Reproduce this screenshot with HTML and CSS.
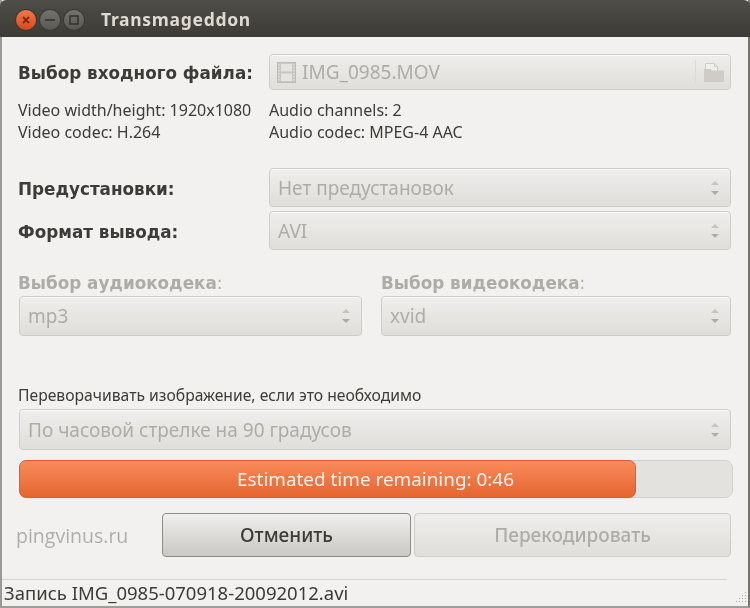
FILE: index.html
```html
<!DOCTYPE html>
<html lang="ru">
<head>
  <meta charset="UTF-8">
  <title>Transmageddon</title>
  <link rel="stylesheet" href="styles.css">
</head>
<body>
  <div class="window">
    <div class="titlebar">
      <div class="win-buttons">
        <span class="win-btn close">
          <svg width="10" height="10" viewBox="0 0 10 10"><path d="M2 2l6 6M8 2l-6 6" stroke="#7a2a10" stroke-width="1.8" fill="none"/></svg>
        </span>
        <span class="win-btn">
          <svg width="10" height="10" viewBox="0 0 10 10"><path d="M0 5h10" stroke="#33322d" stroke-width="1.6" fill="none"/></svg>
        </span>
        <span class="win-btn">
          <svg width="10" height="10" viewBox="0 0 10 10"><rect x="1" y="1" width="8" height="8" stroke="#33322d" stroke-width="1.5" fill="none"/></svg>
        </span>
      </div>
      <span class="title">Transmageddon</span>
    </div>

    <div class="content">
      <div class="row file-row">
        <label class="label">Выбор входного файла:</label>
        <div class="control file-control">
          <svg class="film" width="19" height="21" viewBox="0 0 19 21">
            <rect x="0.5" y="0.500" width="18" height="20" fill="#c9c7c2" stroke="#bdbbb6"/>
            <rect x="4" y="2" width="11" height="7.500" fill="#e6e4e1"/>
            <rect x="4" y="11.500" width="11" height="7.500" fill="#e6e4e1"/>
            <path d="M2 2v17M17 2v17" stroke="#e0ded9" stroke-width="1.500" stroke-dasharray="1.500 1.500" fill="none"/>
          </svg>
          <span class="file-name">IMG_0985.MOV</span>
          <span class="file-sep"></span>
          <svg class="folder" width="22" height="20" viewBox="0 0 22 20">
            <path d="M2.500 9V1.500h9l3 3V9" fill="#f1efec" stroke="#d0cec9"/>
            <path d="M11.500 1.500v3h3" fill="none" stroke="#d0cec9"/>
            <path d="M1 7h7l1 1.500h12V20H1z" fill="#cfcbc7"/>
          </svg>
        </div>
      </div>

      <div class="info">
        <div class="info-col left">
          <div>Video width/height: 1920x1080</div>
          <div>Video codec: H.264</div>
        </div>
        <div class="info-col">
          <div>Audio channels: 2</div>
          <div>Audio codec: MPEG-4 AAC</div>
        </div>
      </div>

      <div class="row preset-row">
        <label class="label">Предустановки:</label>
        <div class="control select">
          <span>Нет предустановок</span>
          <span class="spin"><i class="up"></i><i class="down"></i></span>
        </div>
      </div>
      <div class="row format-row">
        <label class="label">Формат вывода:</label>
        <div class="control select">
          <span>AVI</span>
          <span class="spin"><i class="up"></i><i class="down"></i></span>
        </div>
      </div>

      <div class="codecs">
        <div class="codec audio">
          <div class="label off">Выбор аудиокодека<span class="colon">:</span></div>
          <div class="control select small">
            <span>mp3</span>
            <span class="spin"><i class="up"></i><i class="down"></i></span>
          </div>
        </div>
        <div class="codec video">
          <div class="label off">Выбор видеокодека<span class="colon">:</span></div>
          <div class="control select small">
            <span>xvid</span>
            <span class="spin"><i class="up"></i><i class="down"></i></span>
          </div>
        </div>
      </div>

      <div class="rotate-label">Переворачивать изображение, если это необходимо</div>
      <div class="control select rotate">
        <span>По часовой стрелке на 90 градусов</span>
        <span class="spin"><i class="up"></i><i class="down"></i></span>
      </div>

      <div class="progress">
        <div class="progress-fill" style="width: 615px"></div>
        <span class="progress-text">Estimated time remaining: 0:46</span>
      </div>

      <div class="actions">
        <span class="brand">pingvinus.ru</span>
        <button class="btn cancel">Отменить</button>
        <button class="btn start">Перекодировать</button>
      </div>
    </div>

    <div class="statusbar">
      <span>Запись IMG_0985-070918-20092012.avi</span>
      <svg class="grip" width="14" height="14" viewBox="0 0 14 14">
        <path d="M12 1h1v1h-1zM9 4h1v1H9zM12 4h1v1h-1zM6 7h1v1H6zM9 7h1v1H9zM12 7h1v1h-1zM3 10h1v1H3zM6 10h1v1H6zM9 10h1v1H9zM12 10h1v1h-1z" fill="#a9a7a2"/>
      </svg>
    </div>
  </div>
</body>
</html>
```

FILE: styles.css
```css
* {
  box-sizing: border-box;
}
html, body {
  margin: 0;
  height: 100%;
  background: #f2f1ef;
}
body {
  font-family: "Noto Sans", "Open Sans", sans-serif;
  overflow: hidden;
}
.window {
  width: 750px;
  height: 608px;
  display: flex;
  flex-direction: column;
  background: #f2f1ef;
  border-left: 2px solid #9c9a94;
  border-right: 2px solid #77756f;
  border-bottom: 2px solid #a09e98;
  color: #3c3b37;
  filter: blur(0.35px);
}

/* title bar */
.titlebar {
  height: 37px;
  margin: 0 -2px;
  display: flex;
  align-items: center;
  background: linear-gradient(#4f4d47, #3c3b36);
  border-radius: 6px 6px 0 0;
  flex-shrink: 0;
}
.win-buttons {
  display: flex;
  gap: 4px;
  margin-left: 16px;
  margin-top: 2px;
}
.win-btn {
  width: 20px;
  height: 20px;
  border-radius: 50%;
  display: flex;
  align-items: center;
  justify-content: center;
  background: linear-gradient(#75736d, #5a5852);
  box-shadow: 0 0 0 1px #3a3934;
}
.win-btn.close {
  background: linear-gradient(#f5774a, #d9481c);
}
.title {
  margin-left: 17px;
  font-size: 17.5px;
  font-weight: 700;
  color: #dfdbd2;
  letter-spacing: 0.7px;
}

/* main area */
.content {
  flex: 1;
  padding: 17px 17px 0 16px;
}
.row {
  display: flex;
  align-items: center;
}
.row .label {
  margin-top: 2px;
}
.label {
  width: 251px;
  font-family: "DejaVu Sans", sans-serif;
  font-size: 16.8px;
  font-weight: 700;
  color: #3c3b37;
  flex-shrink: 0;
}
.label.off {
  color: #aeaca7;
  width: auto;
}
.colon {
  font-weight: 400;
}
.control {
  display: flex;
  align-items: center;
  flex: 1;
  font-size: 19px;
  color: #aeaca7;
  background: linear-gradient(#efeeec, #dfdedb);
  border: 1px solid #cfcdc9;
  border-radius: 4px;
  box-shadow: inset 0 1px 0 #fafaf9;
}

.file-control {
  height: 36px;
  padding: 0 5px 0 7px;
}
.film {
  margin-right: 6px;
}
.file-name {
  flex: 1;
}
.file-sep {
  width: 1px;
  height: 24px;
  background: #dcdad7;
  margin-right: 7px;
}

.info {
  display: flex;
  margin-top: 10px;
  font-size: 16px;
  line-height: 21.5px;
  color: #3c3b37;
}
.info-col.left {
  width: 251px;
}

.select {
  padding: 0 11px 0 8px;
  justify-content: space-between;
}
.preset-row {
  margin-top: 25px;
}
.preset-row .select {
  height: 39px;
}
.format-row {
  margin-top: 4px;
}
.format-row .select {
  height: 39px;
}
.spin {
  display: flex;
  flex-direction: column;
  gap: 6px;
}
.spin i {
  display: block;
  width: 0;
  height: 0;
  border-left: 4px solid transparent;
  border-right: 4px solid transparent;
}
.spin .up {
  border-bottom: 4px solid #c6c4bf;
}
.spin .down {
  border-top: 4px solid #aeaca7;
}

.codecs {
  display: flex;
  margin-top: 22px;
}
.codec.audio {
  width: 344px;
  margin-right: 19px;
}
.codec.video {
  width: 350px;
}
.codec .label {
  margin-bottom: 1px;
  line-height: 23px;
}
.codec.audio .select {
  margin-left: 1px;
}
.select.small {
  height: 40px;
}

.rotate-label {
  margin-top: 49px;
  font-size: 15.7px;
  line-height: 20px;
  color: #3c3b37;
}
.select.rotate {
  height: 41px;
  margin-top: 4px;
  margin-left: 1px;
}

.progress {
  position: relative;
  height: 38px;
  width: 714px;
  margin: 10px 0 0 1px;
  background: #e3e2df;
  border: 1px solid #d3d1cd;
  border-radius: 8px;
}
.progress-fill {
  background: linear-gradient(#f98a5c, #e5652f);
  border: 1px solid #d7602e;
  border-radius: 7px;
  margin: -1px 0 0 -1px;
  box-sizing: content-box;
  height: 36px;
}
.progress-text {
  position: absolute;
  left: 0;
  top: 0;
  width: 711px;
  text-align: center;
  line-height: 36px;
  font-size: 18.9px;
  color: #fdf2ec;
}

.actions {
  display: flex;
  align-items: center;
  margin-top: 15px;
  height: 44px;
}
.brand {
  width: 146px;
  margin-left: -2px;
  font-family: "Open Sans", sans-serif;
  font-size: 19.5px;
  color: #b0aeab;
}
.btn {
  height: 44px;
  font-family: inherit;
  font-size: 19px;
  font-weight: 500;
  border-radius: 4px;
}
.btn.cancel {
  width: 249px;
  color: #3c3b37;
  background: linear-gradient(#f0efed, #c9c8c5);
  border: 1px solid #8e8c87;
}
.btn.start {
  width: 317px;
  margin-left: 3px;
  color: #aeaca7;
  background: linear-gradient(#efeeec, #dfdedb);
  border: 1px solid #cfcdc9;
}

.statusbar {
  position: relative;
  height: 27px;
  margin: 0 21px 0 0;
  border-top: 1px solid #d5d3cf;
  padding-left: 2px;
  font-size: 18.5px;
  line-height: 26px;
  color: #3c3b37;
  flex-shrink: 0;
}
.grip {
  position: absolute;
  right: -20px;
  bottom: 1px;
}
```
